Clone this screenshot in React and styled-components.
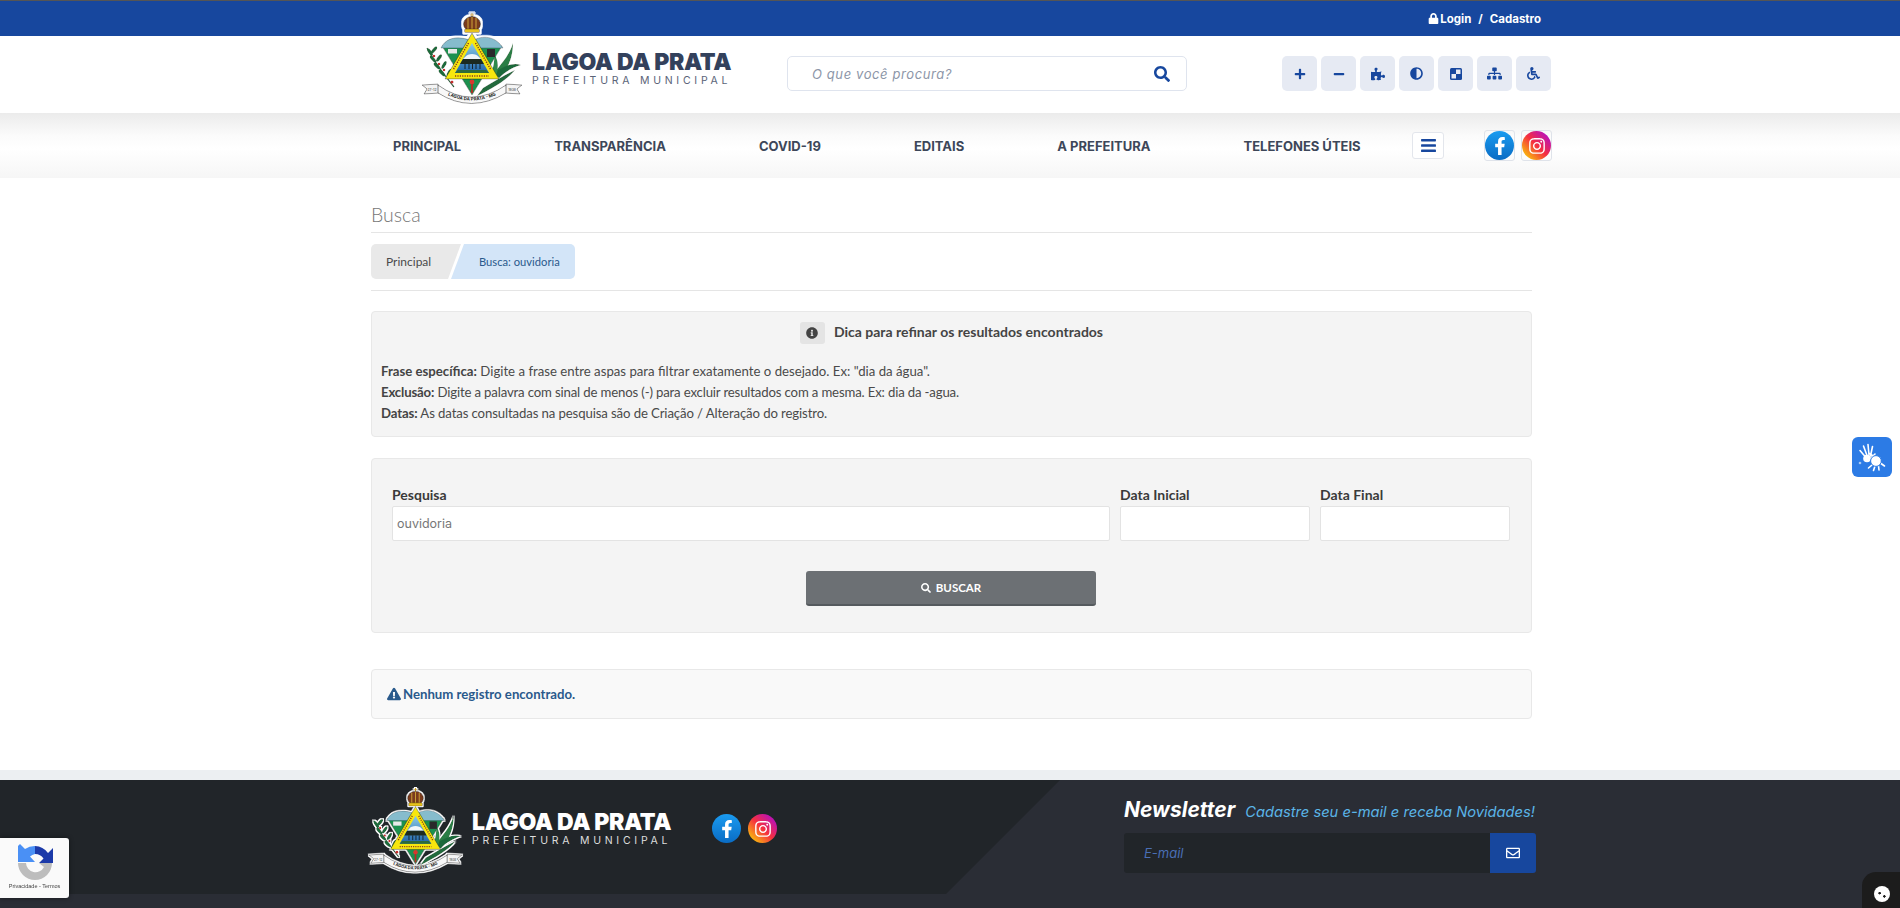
import React from 'react';
import styled, { createGlobalStyle } from 'styled-components';
import {
  FaLock, FaSearch, FaPlus, FaMinus, FaPuzzlePiece, FaAdjust, FaSitemap, FaWheelchair,
  FaBars, FaFacebookF, FaInstagram, FaInfoCircle, FaExclamationTriangle, FaRegEnvelope,
} from 'react-icons/fa';

const HEAD_FONT = 'Inter, "Open Sans", "Liberation Sans", sans-serif';
const BLUE = '#17479e';

const GlobalStyle = createGlobalStyle`
  html, body { margin: 0; padding: 0; background: #fff; }
  body { font-family: Lato, "Liberation Sans", sans-serif; font-size: 14px; color: #444; overflow: hidden; }
  * { box-sizing: border-box; }
`;

function Crest({ size, id }) {
  const leaflets = [[9, 40, -35], [13, 38, 40], [12, 47, -40], [18, 46, 35], [16, 54, -45], [23, 53, 30], [21, 61, -45], [28, 61, 25]];
  return (
    <CrestSvg width={size} height={size * 94 / 102} viewBox="0 0 102 94">
      <defs>
        <linearGradient id={`${id}-sky`} x1="0" y1="0" x2="0" y2="1">
          <stop offset="0" stopColor="#8ccbe6" />
          <stop offset="1" stopColor="#1c62a8" />
        </linearGradient>
        <filter id={`${id}-halo`} filterUnits="userSpaceOnUse" x="-5" y="-5" width="112" height="104">
          <feMorphology in="SourceAlpha" operator="dilate" radius="1.5" result="grown" />
          <feFlood floodColor="#fff" />
          <feComposite in2="grown" operator="in" result="edge" />
          <feMerge>
            <feMergeNode in="edge" />
            <feMergeNode in="SourceGraphic" />
          </feMerge>
        </filter>
        <path id={`${id}-arc`} d="M17 78 Q50 99 85 78" />
      </defs>
      <g filter={`url(#${id}-halo)`}>
        <path d="M6 36 C12 48 21 60 33 75" stroke="#1d5f36" strokeWidth="1.4" fill="none" />
        {leaflets.map(([x, y, r]) => (
          <ellipse key={`${x}-${y}`} cx={x} cy={y} rx="1.7" ry="4.4" fill="#1f6b3a" transform={`rotate(${r} ${x} ${y})`} />
        ))}
        <g fill="#c62f2f">
          <circle cx="13" cy="44" r="1.3" />
          <circle cx="18" cy="52" r="1.3" />
          <circle cx="23" cy="58" r="1.3" />
          <circle cx="31" cy="70" r="1.6" />
        </g>
        <path d="M56 84 C72 76 86 68 94 58 C84 63 72 70 62 76Z" fill="#236b3c" />
        <path d="M72 62 C80 52 88 44 92 31 C92 44 88 56 78 66Z" fill="#2a7d44" />
        <path d="M74 60 C84 54 92 50 100 53 C92 55 84 60 78 66Z" fill="#1f6b3a" />
        <path d="M70 64 C72 56 74 48 73 42 C78 48 78 58 74 66Z" fill="#2f8a4c" />

        <path d="M21 34 L81 34 L51 83 Z" fill="#1a9150" stroke="#15402a" strokeWidth=".5" />
        <path d="M20 36 C24 27 34 23 49 28 L49 36Z" fill="#86bccd" stroke="#3a5a66" strokeWidth=".5" />
        <path d="M53 28 C64 22 76 26 82 36 L53 36Z" fill="#86bccd" stroke="#3a5a66" strokeWidth=".5" />
        <rect x="27" y="37" width="9" height="4.5" fill="#e8e8e8" />
        <rect x="66" y="37" width="8" height="8" fill="#2b2b2b" />

        <path d="M51 1 V5 M49 3 H53" stroke="#c9a21a" strokeWidth="1.2" />
        <ellipse cx="51" cy="12" rx="8.500" ry="7.500" fill="#7a3a1c" stroke="#33200e" strokeWidth=".7" />
        <path d="M47 6 V18 M51 5 V18 M55 6 V18" stroke="#d9b23a" strokeWidth=".9" />
        <rect x="43.500" y="17" width="15" height="3.500" rx="1" fill="#e8c31c" stroke="#33200e" strokeWidth=".4" />
        <path d="M51 21 L78 67 L24 67Z" fill="#f7e70f" stroke="#17301e" strokeWidth=".5" />
        <path d="M47.500 31 L32 58 M54.500 31 L70 58 M34 64 L68 64" stroke="#8a3a1c" strokeWidth="1.500" strokeDasharray="1.2 1.2" fill="none" />
        <path d="M51 31 L68 61 L34 61Z" fill={`url(#${id}-sky)`} />
        <path d="M44 45 C47 41 55 41 58 45 L60 47 L42 47Z" fill="#f0f5f8" />
        <path d="M42 47 L60 47 L63 52 L39 52Z" fill="#1c2b22" />
        <path d="M44 52 V57 M48 52 V57 M51.500 52 V57 M55 52 V57 M59 52 V57" stroke="#12212a" strokeWidth="1" />
        <path d="M37 58 L65 58 L68 61 L34 61Z" fill="#2d6b3a" />
        <circle cx="51" cy="70" r="2.400" fill="#d7382e" />
        <path d="M51 72 V81" stroke="#b92c24" strokeWidth="1.800" />

        <path d="M1 73 L17 72 L19 81 L3 82 L6 77Z M101 73 L85 72 L83 81 L99 82 L96 77Z" fill="#f4f4f4" stroke="#333" strokeWidth=".6" />
        <path d="M17 73 Q50 97 85 73 L85 81 Q50 102 17 81Z" fill="#f8f8f8" stroke="#333" strokeWidth=".6" />
      </g>
      <text fontSize="4.400" fontWeight="700" fontFamily="Inter, sans-serif" fill="#222">
        <textPath href={`#${id}-arc`} startOffset="50%" textAnchor="middle">LAGOA DA PRATA - MG</textPath>
      </text>
      <text x="11" y="79" textAnchor="middle" fontSize="3.400" fontFamily="Inter, sans-serif" fill="#333">27-12</text>
      <text x="91" y="79" textAnchor="middle" fontSize="3.400" fontFamily="Inter, sans-serif" fill="#333">1938</text>
    </CrestSvg>
  );
}

function CheckerIcon() {
  return (
    <svg width="14" height="14" viewBox="0 0 14 14">
      <rect x="1" y="1" width="12" height="12" rx="1.5" fill={BLUE} />
      <rect x="7" y="2.5" width="4.5" height="4.5" fill="#e6eaf3" />
      <rect x="2.5" y="7" width="4.5" height="4.5" fill="#e6eaf3" />
    </svg>
  );
}

function RecaptchaIcon() {
  return (
    <svg width="36" height="40" viewBox="0 0 36 40">
      <path d="M18 4 A17 17 0 0 1 31 11 L36 6 L36 21 L22 21 L26.500 16.500 A10 10 0 0 0 18 12Z" fill="#1c3aa9" />
      <path d="M3 2 L8 7 A17 17 0 0 1 18 4 L18 12 A10 10 0 0 0 13 14.500 L18 20 L1 20 L1 4Z" fill="#4a90f5" />
      <path d="M1 21 L9 21 A9.500 9.500 0 0 0 27 25 L22 21 L35 21 A17 17 0 0 1 1 21Z" fill="#bdbdbd" />
    </svg>
  );
}

function HandsIcon() {
  return (
    <svg width="40" height="40" viewBox="0 0 40 40" fill="none" strokeLinecap="round">
      <path d="M13.500 20 L8 13.500 M15 18.500 L11.500 9 M17 18 L16 7.500 M18.500 19 L20.500 9.500 M18 22 L23 17" stroke="#fff" strokeWidth="1.600" />
      <circle cx="15" cy="21.500" r="3.800" fill="#fff" />
      <circle cx="8" cy="26" r="1.300" fill="#a9ccf5" />
      <path d="M20 28 L16.500 31 M23 29 L21.500 33.500 M26.500 29 L27 33 M29 26.500 L32.500 29 M21 19 L17.500 16.500" stroke="#fff" strokeWidth="1.600" />
      <circle cx="24" cy="24" r="5.400" fill="#fff" stroke="#2c7be5" strokeWidth="1" />
    </svg>
  );
}

function Social({ size, framed }) {
  const icons = [
    { key: 'fb', bg: 'linear-gradient(180deg, #1a9bf0, #0a6cc4)', icon: <FaFacebookF /> },
    { key: 'ig', bg: 'linear-gradient(45deg, #f9c20a 10%, #f5303f 50%, #b50ec4 90%)', icon: <FaInstagram /> },
  ];
  return (
    <SocialRow $gap={framed ? 6 : 7}>
      {icons.map(({ key, bg, icon }) => (
        <SocialFrame key={key} $framed={framed}>
          <SocialIcon $size={size} $bg={bg}>{icon}</SocialIcon>
        </SocialFrame>
      ))}
    </SocialRow>
  );
}

const menu = ['PRINCIPAL', 'TRANSPARÊNCIA', 'COVID-19', 'EDITAIS', 'A PREFEITURA', 'TELEFONES ÚTEIS'];

export default function App() {
  return (
    <>
      <GlobalStyle />
      <TopBar>
        <TopLink><FaLock size={11} />Login</TopLink>
        <TopSlash>/</TopSlash>
        <TopLink>Cadastro</TopLink>
      </TopBar>

      <Header>
        <LogoLink>
          <Crest size={102} id="crest-top" />
          <LogoText>
            <LogoTitle>LAGOA DA PRATA</LogoTitle>
            <LogoSub>PREFEITURA MUNICIPAL</LogoSub>
          </LogoText>
        </LogoLink>
        <SearchBar>
          <SearchHint>O que você procura?</SearchHint>
          <FaSearch size={16} color={BLUE} />
        </SearchBar>
        <Tools>
          <Tool><FaPlus size={12} /></Tool>
          <Tool><FaMinus size={12} /></Tool>
          <Tool><FaPuzzlePiece size={14} /></Tool>
          <Tool><FaAdjust size={13} /></Tool>
          <Tool><CheckerIcon /></Tool>
          <Tool><FaSitemap size={15} /></Tool>
          <Tool><FaWheelchair size={13} /></Tool>
        </Tools>
      </Header>

      <Nav>
        <NavList>
          {menu.map(item => <NavItem key={item}>{item}</NavItem>)}
        </NavList>
        <MenuButton><FaBars /></MenuButton>
        <Social size={29} framed />
      </Nav>

      <Main>
        <PageTitle>Busca</PageTitle>
        <Crumbs>
          <CrumbHome>Principal</CrumbHome>
          <CrumbCurrent>Busca: ouvidoria</CrumbCurrent>
        </Crumbs>

        <TipBox>
          <TipHead>
            <TipIcon><FaInfoCircle /></TipIcon>
            Dica para refinar os resultados encontrados
          </TipHead>
          <TipLine><b>Frase específica:</b> Digite a frase entre aspas para filtrar exatamente o desejado. Ex: "dia da água".</TipLine>
          <TipLine $track={-0.16}><b>Exclusão:</b> Digite a palavra com sinal de menos (-) para excluir resultados com a mesma. Ex: dia da -agua.</TipLine>
          <TipLine $track={-0.12}><b>Datas:</b> As datas consultadas na pesquisa são de Criação / Alteração do registro.</TipLine>
        </TipBox>

        <SearchBox>
          <Fields>
            <Field>
              <FieldLabel>Pesquisa</FieldLabel>
              <FieldInput defaultValue="ouvidoria" />
            </Field>
            <Field>
              <FieldLabel>Data Inicial</FieldLabel>
              <FieldInput />
            </Field>
            <Field>
              <FieldLabel>Data Final</FieldLabel>
              <FieldInput />
            </Field>
          </Fields>
          <SubmitButton><FaSearch size={10} />BUSCAR</SubmitButton>
        </SearchBox>

        <EmptyAlert><FaExclamationTriangle size={14} />Nenhum registro encontrado.</EmptyAlert>
      </Main>

      <Footer>
        <FooterLeft>
          <Crest size={95} id="crest-bottom" />
          <FooterBrand>
            <FooterTitle>LAGOA DA PRATA</FooterTitle>
            <FooterSub>PREFEITURA MUNICIPAL</FooterSub>
          </FooterBrand>
          <FooterSocial><Social size={29} /></FooterSocial>
        </FooterLeft>
        <Newsletter>
          <NewsHead>
            <NewsTitle>Newsletter</NewsTitle>
            <NewsText>Cadastre seu e-mail e receba Novidades!</NewsText>
          </NewsHead>
          <NewsForm>
            <NewsInput>E-mail</NewsInput>
            <NewsButton><FaRegEnvelope size={14} /></NewsButton>
          </NewsForm>
        </Newsletter>
      </Footer>

      <SignWidget><HandsIcon /></SignWidget>
      <RecaptchaBadge>
        <RecaptchaIcon />
        <RecaptchaText>Privacidade - Termos</RecaptchaText>
      </RecaptchaBadge>
      <CookieTab><CookieDot /></CookieTab>
    </>
  );
}

const CrestSvg = styled.svg`
  flex-shrink: 0;
  overflow: visible;
`;

const TopBar = styled.div`
  height: 36px;
  background: ${BLUE};
  border-top: 1px solid #555;
  padding-right: 359px;
  display: flex;
  align-items: center;
  justify-content: flex-end;
  gap: 7px;
  color: #fff;
  font-family: ${HEAD_FONT};
  font-size: 11.5px;
  font-weight: 700;
`;

const TopLink = styled.span`
  display: inline-flex;
  align-items: center;
  gap: 1px;
`;

const TopSlash = styled.span``;

const Header = styled.header`
  height: 77px;
  padding: 0 349px 2px 421px;
  display: flex;
  align-items: center;
  background: #fff;
`;

const LogoLink = styled.div`
  display: flex;
  align-items: center;
  gap: 9px;
  width: 366px;
  margin-top: -29px;
  position: relative;
`;

const LogoText = styled.div`
  padding-top: 20px;
`;

const LogoTitle = styled.div`
  font-family: ${HEAD_FONT};
  font-size: 23px;
  font-weight: 900;
  line-height: 24px;
  letter-spacing: -0.35px;
  color: #33415c;
  white-space: nowrap;
`;

const LogoSub = styled.div`
  font-family: ${HEAD_FONT};
  font-size: 10.5px;
  line-height: 14px;
  letter-spacing: 3.75px;
  color: #5b6478;
  white-space: nowrap;
`;

const SearchBar = styled.div`
  width: 400px;
  height: 35px;
  border: 1px solid #dfe4ee;
  border-radius: 5px;
  padding: 0 16px 0 24px;
  display: flex;
  align-items: center;
  justify-content: space-between;
`;

const SearchHint = styled.span`
  font-family: ${HEAD_FONT};
  font-size: 13px;
  font-style: italic;
  letter-spacing: 0.6px;
  color: #8d96a8;
`;

const Tools = styled.div`
  margin-left: auto;
  display: flex;
  gap: 4px;
`;

const Tool = styled.button`
  width: 35px;
  height: 35px;
  padding: 0;
  border: 0;
  border-radius: 5px;
  background: #e6eaf3;
  color: ${BLUE};
  display: flex;
  align-items: center;
  justify-content: center;
`;

const Nav = styled.nav`
  height: 65px;
  padding-left: 393px;
  display: flex;
  align-items: center;
  background: linear-gradient(180deg, #ebebeb 0%, #fbfbfb 35%, #fff 55%, #f6f6f6 100%);
`;

const NavList = styled.div`
  display: flex;
  gap: 93px;
  width: 1019px;
`;

const NavItem = styled.span`
  font-family: ${HEAD_FONT};
  font-size: 13px;
  font-weight: 700;
  color: #3d4759;
  white-space: nowrap;
`;

const MenuButton = styled.button`
  width: 32px;
  height: 27px;
  padding: 0;
  border: 1px solid #e3e6ec;
  border-radius: 3px;
  background: #fff;
  color: ${BLUE};
  font-size: 17px;
  display: flex;
  align-items: center;
  justify-content: center;
  margin-right: 40px;
`;

const SocialRow = styled.div`
  display: flex;
  gap: ${p => p.$gap}px;
`;

const SocialFrame = styled.span`
  display: block;
  border: ${p => (p.$framed ? '1px solid #dfe3ea' : '0')};
  border-radius: 3px;
`;

const SocialIcon = styled.span`
  width: ${p => p.$size}px;
  height: ${p => p.$size}px;
  border-radius: 50%;
  background: ${p => p.$bg};
  color: #fff;
  font-size: ${p => Math.round(p.$size * 0.62)}px;
  display: flex;
  align-items: center;
  justify-content: center;
`;

const Main = styled.main`
  margin: 0 368px 0 371px;
  height: 592px;
  padding-top: 26px;
`;

const PageTitle = styled.h1`
  margin: 0;
  height: 29px;
  font-size: 19.5px;
  font-weight: 300;
  line-height: 22px;
  color: #777;
  border-bottom: 1px solid #e5e5e5;
`;

const Crumbs = styled.div`
  margin-top: 11px;
  padding-bottom: 11px;
  display: flex;
  border-bottom: 1px solid #e5e5e5;
  font-size: 12px;
  line-height: 35px;
  height: 47px;
`;

const CrumbHome = styled.span`
  width: 90px;
  height: 35px;
  padding-left: 15px;
  background: #e9e9e9;
  color: #4a4a4a;
  border-radius: 5px 0 0 5px;
  clip-path: polygon(0 0, 100% 0, calc(100% - 13px) 100%, 0 100%);
`;

const CrumbCurrent = styled.span`
  width: 124px;
  height: 35px;
  margin-left: -10px;
  padding-left: 28px;
  background: #d3e5f8;
  color: #2a5a8c;
  font-size: 11.2px;
  border-radius: 0 5px 5px 0;
  clip-path: polygon(13px 0, 100% 0, 100% 100%, 0 100%);
`;

const TipBox = styled.section`
  margin-top: 20px;
  height: 126px;
  padding: 10px 9px 0;
  background: #f4f4f4;
  border: 1px solid #e8e8e8;
  border-radius: 4px;
`;

const TipHead = styled.div`
  height: 39px;
  display: flex;
  align-items: flex-start;
  justify-content: center;
  gap: 9px;
  font-weight: 700;
  line-height: 20px;
  color: #444;
`;

const TipIcon = styled.span`
  width: 25px;
  height: 22px;
  border-radius: 3px;
  background: #e4e4e4;
  color: #444;
  font-size: 12px;
  display: flex;
  align-items: center;
  justify-content: center;
`;

const TipLine = styled.div`
  font-size: 13.2px;
  line-height: 21px;
  letter-spacing: ${p => p.$track || 0}px;
  color: #4a4a4a;
  b { color: #444; }
`;

const SearchBox = styled.section`
  margin-top: 21px;
  height: 175px;
  padding: 29px 21px 0 20px;
  background: #f4f4f4;
  border: 1px solid #e8e8e8;
  border-radius: 4px;
`;

const Fields = styled.div`
  display: grid;
  grid-template-columns: 718px 190px 190px;
  column-gap: 10px;
`;

const Field = styled.div`
  display: flex;
  flex-direction: column;
`;

const FieldLabel = styled.label`
  font-weight: 700;
  height: 18px;
  line-height: 14px;
  color: #3a3a3a;
`;

const FieldInput = styled.input`
  height: 35px;
  padding: 0 4px;
  border: 1px solid #e3e3e3;
  border-radius: 2px;
  background: #fff;
  font-family: ${HEAD_FONT};
  font-size: 12.5px;
  color: #777;
  outline: none;
`;

const SubmitButton = styled.button`
  display: flex;
  align-items: center;
  justify-content: center;
  gap: 5px;
  width: 290px;
  height: 35px;
  margin: 30px 0 0 414px;
  border: 0;
  border-bottom: 2px solid #555a5e;
  border-radius: 3px;
  background: #6c7074;
  color: #fff;
  font-family: Lato, sans-serif;
  font-size: 11.5px;
  font-weight: 700;
`;

const EmptyAlert = styled.div`
  margin-top: 36px;
  height: 50px;
  padding-left: 15px;
  display: flex;
  align-items: center;
  gap: 2px;
  background: #f9f9f9;
  border: 1px solid #e8e8e8;
  border-radius: 4px;
  color: #2a5a8c;
  font-size: 13.2px;
  font-weight: 700;
`;

const Footer = styled.footer`
  position: relative;
  height: 138px;
  border-top: 10px solid #eceff2;
  padding: 7px 364px 0 368px;
  display: flex;
  justify-content: space-between;
  background: #2a2d35;
  &::before {
    content: '';
    position: absolute;
    left: 0;
    top: 0;
    width: 1060px;
    height: 114px;
    background: #212529;
    clip-path: polygon(0 0, 100% 0, calc(100% - 114px) 100%, 0 100%);
  }
`;

const FooterLeft = styled.div`
  position: relative;
  display: flex;
  align-items: flex-start;
`;

const FooterBrand = styled.div`
  margin: 23px 0 0 9px;
`;

const FooterTitle = styled(LogoTitle)`
  color: #fff;
`;

const FooterSub = styled(LogoSub)`
  color: #ddd;
`;

const FooterSocial = styled.div`
  margin: 27px 0 0 41px;
`;

const Newsletter = styled.div`
  position: relative;
  width: 412px;
  padding-top: 10px;
`;

const NewsHead = styled.div`
  display: flex;
  align-items: baseline;
  gap: 10px;
  height: 36px;
  font-style: italic;
  white-space: nowrap;
`;

const NewsTitle = styled.span`
  font-family: ${HEAD_FONT};
  font-size: 21px;
  font-weight: 700;
  color: #fff;
`;

const NewsText = styled.span`
  font-family: ${HEAD_FONT};
  font-size: 14.7px;
  color: #5bb5e8;
`;

const NewsForm = styled.div`
  display: flex;
  height: 40px;
`;

const NewsInput = styled.div`
  flex: 1;
  padding-left: 20px;
  background: #212529;
  border-radius: 3px 0 0 3px;
  font-family: ${HEAD_FONT};
  font-size: 13px;
  font-style: italic;
  line-height: 40px;
  color: #4a6fb5;
`;

const NewsButton = styled.div`
  width: 46px;
  background: ${BLUE};
  border-radius: 0 3px 3px 0;
  color: #fff;
  display: flex;
  align-items: center;
  justify-content: center;
`;

const SignWidget = styled.div`
  position: fixed;
  left: 1852px;
  top: 437px;
  width: 40px;
  height: 40px;
  border-radius: 6px;
  background: #2c7be5;
`;

const RecaptchaBadge = styled.div`
  position: fixed;
  left: 0;
  top: 838px;
  width: 69px;
  height: 60px;
  background: #fafafa;
  border-radius: 0 3px 3px 0;
  box-shadow: 0 0 5px rgba(0, 0, 0, 0.45);
  display: flex;
  flex-direction: column;
  align-items: center;
  padding-top: 4px;
`;

const RecaptchaText = styled.span`
  margin-top: 1px;
  font-family: "Liberation Sans", sans-serif;
  font-size: 5.5px;
  color: #444;
  white-space: nowrap;
`;

const CookieTab = styled.div`
  position: fixed;
  right: 0;
  bottom: 0;
  width: 38px;
  height: 36px;
  background: #1c1c1c;
  border-radius: 14px 0 0 0;
  padding: 14px 0 0 12px;
`;

const CookieDot = styled.span`
  display: block;
  width: 16px;
  height: 16px;
  border-radius: 50%;
  background:
    radial-gradient(circle at 35% 45%, #1c1c1c 1px, transparent 1.5px),
    radial-gradient(circle at 65% 65%, #1c1c1c 1px, transparent 1.5px),
    #fff;
`;
